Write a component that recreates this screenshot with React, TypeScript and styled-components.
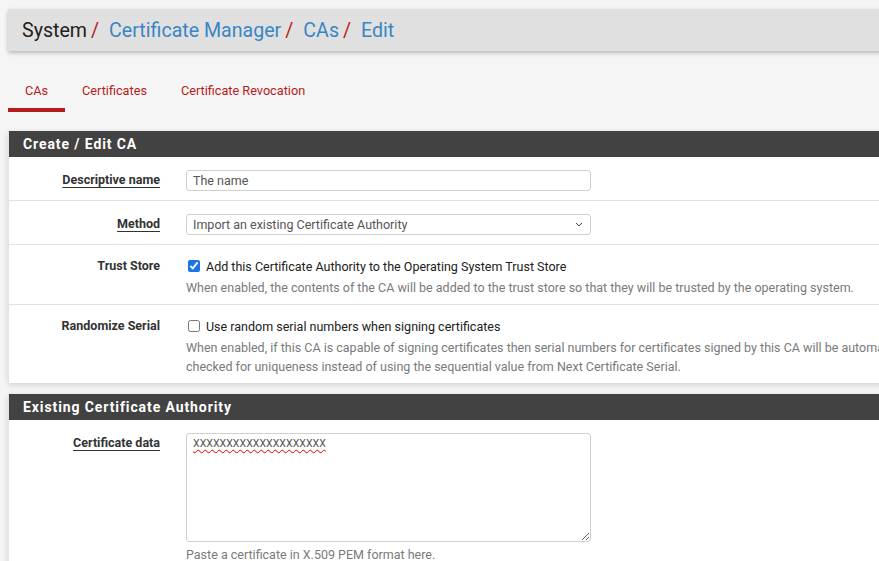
import styled, { createGlobalStyle } from "styled-components";

const GlobalStyle = createGlobalStyle`
  html, body {
    margin: 0;
    padding: 0;
    background: #f5f5f5;
    overflow: hidden;
  }
  body {
    font-family: Roboto, "Liberation Sans", sans-serif;
    color: #212121;
  }
`;

const Page = styled.div`
  width: 1180px;
  padding: 9px 0 0 8px;
`;

const Breadcrumb = styled.h1`
  margin: 0;
  height: 42px;
  display: flex;
  align-items: center;
  padding-left: 14px;
  background: #e0e0e0;
  box-shadow: 0 2px 4px rgba(0, 0, 0, 0.25);
  font-size: 19.6px;
  font-weight: 400;
  color: #212121;
`;

const Crumb = styled.span<{ $link?: boolean }>`
  color: ${(p) => (p.$link ? "#3a86c5" : "#212121")};
`;

const Slash = styled.span`
  color: #b71c1c;
  margin: 0 10px 0 4px;
`;

const Tabs = styled.ul`
  list-style: none;
  margin: 29px 0 0;
  padding: 0;
  display: flex;
`;

const Tab = styled.li<{ $active?: boolean }>`
  padding: 0 17px;
  height: 32px;
  line-height: 22px;
  font-size: 12.7px;
  color: #b71c1c;
  box-sizing: border-box;
  border-bottom: 4px solid ${(p) => (p.$active ? "#b71c1c" : "transparent")};
`;

const Panel = styled.section<{ $gap?: number }>`
  margin-top: ${(p) => p.$gap ?? 19}px;
  background: #fff;
  border-left: 1px solid #e4e4e4;
  box-shadow: 0 2px 6px rgba(0, 0, 0, 0.15);
`;

const PanelHeading = styled.h2`
  margin: 0;
  height: 26px;
  background: #424242;
  color: #fff;
  font-size: 14px;
  font-weight: 700;
  letter-spacing: 0.9px;
  line-height: 26px;
  padding-left: 14px;
`;

const Row = styled.div<{ $check?: boolean }>`
  display: grid;
  grid-template-columns: 166px 1fr;
  padding: ${(p) => (p.$check ? "12px 0 7px" : "13px 0 9px")};
  border-bottom: 1px solid #e2e2e2;
  &:last-child {
    border-bottom: none;
  }
`;

const Label = styled.div<{ $under?: boolean; $h?: number }>`
  text-align: right;
  padding-right: 15px;
  font-size: 12.5px;
  font-weight: 700;
  line-height: ${(p) => p.$h ?? 20}px;
  color: #333;
  span {
    text-decoration: ${(p) => (p.$under ? "underline" : "none")};
    text-underline-offset: 3px;
    text-decoration-thickness: 1px;
  }
`;

const Field = styled.div`
  padding-left: 11px;
  font-size: 12.5px;
  color: #212121;
`;

const TextInput = styled.input`
  box-sizing: border-box;
  width: 405px;
  height: 21px;
  border: 1px solid #cfcfcf;
  border-radius: 3px;
  padding: 0 6px;
  font: 12.5px Roboto, "Liberation Sans", sans-serif;
  color: #555;
  outline: none;
`;

const SelectBox = styled.div`
  position: relative;
  width: 405px;
  height: 21px;
  svg {
    position: absolute;
    right: 8px;
    top: 8px;
    pointer-events: none;
  }
`;

const Select = styled.select`
  appearance: none;
  box-sizing: border-box;
  width: 100%;
  height: 21px;
  border: 1px solid #cfcfcf;
  border-radius: 3px;
  padding: 0 6px;
  font: 12.5px Roboto, "Liberation Sans", sans-serif;
  color: #555;
  background: #fff;
  outline: none;
`;

const CheckLine = styled.label`
  display: flex;
  align-items: center;
  height: 18px;
  font-size: 12.5px;
  color: #212121;
  input {
    margin: 0 6px 0 2px;
    width: 12px;
    height: 12px;
    accent-color: #1a73e8;
  }
`;

const Help = styled.p`
  margin: 3px 0 0;
  font-size: 12.5px;
  line-height: 19px;
  color: #7a7a7a;
  white-space: nowrap;
`;

const TextArea = styled.textarea`
  box-sizing: border-box;
  display: block;
  width: 405px;
  height: 109px;
  border: 1px solid #cfcfcf;
  border-radius: 3px;
  padding: 3px 6px;
  font: 10.6px Roboto, "Liberation Sans", sans-serif;
  color: #555;
  text-decoration: underline wavy #e00000;
  text-decoration-thickness: 1px;
  text-underline-offset: 2px;
  outline: none;
`;

export default function App() {
  return (
    <>
      <GlobalStyle />
      <Page>
        <Breadcrumb>
          <Crumb>System</Crumb>
          <Slash>/</Slash>
          <Crumb $link>Certificate Manager</Crumb>
          <Slash>/</Slash>
          <Crumb $link>CAs</Crumb>
          <Slash>/</Slash>
          <Crumb $link>Edit</Crumb>
        </Breadcrumb>

        <Tabs>
          <Tab $active>CAs</Tab>
          <Tab>Certificates</Tab>
          <Tab>Certificate Revocation</Tab>
        </Tabs>

        <Panel>
          <PanelHeading>Create / Edit CA</PanelHeading>
          <Row>
            <Label $under>
              <span>Descriptive name</span>
            </Label>
            <Field>
              <TextInput defaultValue="The name" />
            </Field>
          </Row>
          <Row>
            <Label $under>
              <span>Method</span>
            </Label>
            <Field>
              <SelectBox>
                <Select defaultValue="import">
                  <option value="import">Import an existing Certificate Authority</option>
                </Select>
                <svg width="8" height="5" viewBox="0 0 8 5">
                  <path d="M1 1l3 3 3-3" fill="none" stroke="#444" strokeWidth="1" />
                </svg>
              </SelectBox>
            </Field>
          </Row>
          <Row $check>
            <Label $h={18}>
              <span>Trust Store</span>
            </Label>
            <Field>
              <CheckLine>
                <input type="checkbox" defaultChecked />
                Add this Certificate Authority to the Operating System Trust Store
              </CheckLine>
              <Help>
                When enabled, the contents of the CA will be added to the trust store so that they
                will be trusted by the operating system.
              </Help>
            </Field>
          </Row>
          <Row $check>
            <Label $h={18}>
              <span>Randomize Serial</span>
            </Label>
            <Field>
              <CheckLine>
                <input type="checkbox" />
                Use random serial numbers when signing certificates
              </CheckLine>
              <Help>
                When enabled, if this CA is capable of signing certificates then serial numbers for
                certificates signed by this CA will be automatically randomized and
                <br />
                checked for uniqueness instead of using the sequential value from Next Certificate
                Serial.
              </Help>
            </Field>
          </Row>
        </Panel>

        <Panel $gap={11}>
          <PanelHeading>Existing Certificate Authority</PanelHeading>
          <Row>
            <Label $under>
              <span>Certificate data</span>
            </Label>
            <Field>
              <TextArea spellCheck={false} defaultValue="XXXXXXXXXXXXXXXXXXXX" />
              <Help>Paste a certificate in X.509 PEM format here.</Help>
            </Field>
          </Row>
        </Panel>
      </Page>
    </>
  );
}
